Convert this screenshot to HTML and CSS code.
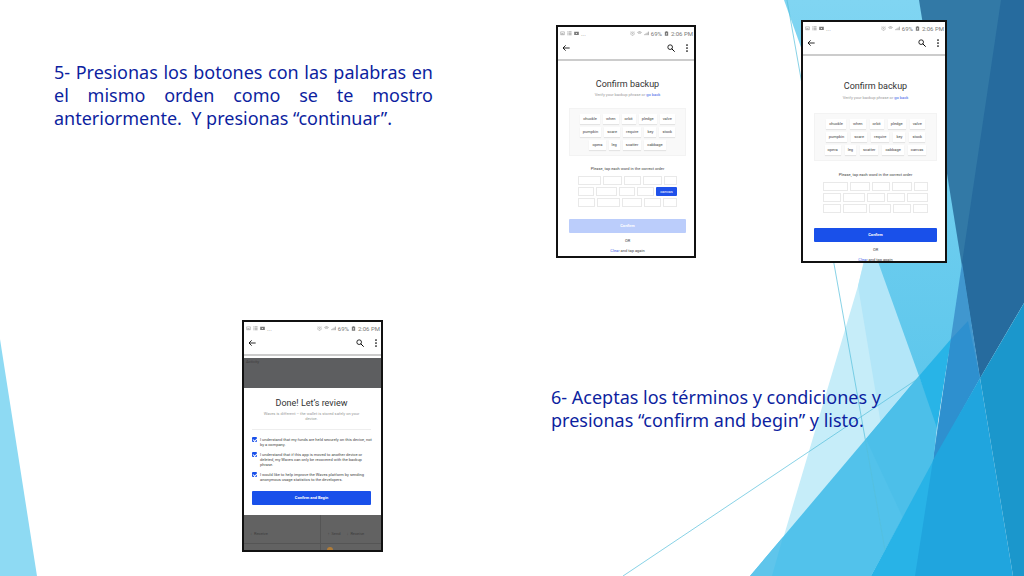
FILE: index.html
```html
<!DOCTYPE html>
<html lang="es">
<head>
    <meta charset="UTF-8">
    <meta name="viewport" content="width=device-width, initial-scale=1">
    <title>Confirmar respaldo</title>
    <link rel="stylesheet" href="styles.css">
</head>
<body>
<!-- icons -->
<svg class="defs" aria-hidden="true">
    <symbol id="i-pic" viewBox="0 0 24 24"><path d="M3 4h18v14H3z" fill="none" stroke="currentColor" stroke-width="2"/><path d="M5 16l5-6 4 4 2-2 3 4z" fill="currentColor"/></symbol>
    <symbol id="i-list" viewBox="0 0 24 24"><path d="M2 4h4M8 4h14M2 11h4M8 11h14M2 18h4M8 18h14" fill="none" stroke="currentColor" stroke-width="3"/></symbol>
    <symbol id="i-video" viewBox="0 0 24 24"><path fill-rule="evenodd" d="M1 4h22v15H1zM9 8v7l7-3.500z" fill="currentColor"/></symbol>
    <symbol id="i-alarm" viewBox="0 0 24 24"><path d="M12 5a8 8 0 1 0 .1 0zM12 9v5l3 2M2 5l4-3M22 5l-4-3" fill="none" stroke="currentColor" stroke-width="2"/></symbol>
    <symbol id="i-wifi" viewBox="0 0 24 24"><path d="M2 7q10-7 20 0M7 12q5-4 10 0" fill="none" stroke="currentColor" stroke-width="3"/></symbol>
    <symbol id="i-signal" viewBox="0 0 24 24"><path d="M3 20v-4M9 20v-8M15 20V8M21 20V3" fill="none" stroke="currentColor" stroke-width="3"/></symbol>
    <symbol id="i-battery" viewBox="0 0 24 24"><path fill-rule="evenodd" d="M8 1h8v3h4v19H4V4h4zM13 8l-5 7h3v4l5-7h-3z" fill="currentColor"/></symbol>
    <symbol id="i-back" viewBox="0 0 24 24"><path d="M23 12H3M11 4l-8 8 8 8" fill="none" stroke="currentColor" stroke-width="2.500"/></symbol>
    <symbol id="i-search" viewBox="0 0 24 24"><circle cx="9.500" cy="9.500" r="7" fill="none" stroke="currentColor" stroke-width="2.500"/><path d="M14 14l9 9" stroke="currentColor" stroke-width="3"/></symbol>
    <symbol id="i-more" viewBox="0 0 24 24"><circle cx="12" cy="3" r="2.600" fill="currentColor"/><circle cx="12" cy="12" r="2.600" fill="currentColor"/><circle cx="12" cy="21" r="2.600" fill="currentColor"/></symbol>
</svg>

<main class="slide">
    <!-- facets -->
    <svg class="facets" viewBox="0 0 1024 576" preserveAspectRatio="none" aria-hidden="true">
        <defs>
            <linearGradient id="sky" x1="0" y1="0" x2="0" y2="1">
                <stop offset="0" stop-color="#80d5f2"/>
                <stop offset="1" stop-color="#5ec7ec"/>
            </linearGradient>
        </defs>
        <path fill="#8edaf3" d="M0 339L37 576H0z"/>
        <path fill="#c6edf9" d="M865 256L858 286 772 576H900L919 376 878 256z"/>
        <path fill="#b3e6f8" d="M867 250L858 286 906 576 940 430 875 250z"/>
        <path fill="url(#sky)" d="M784 0H930L975 320 940 365 919 376z"/>
        <path fill="#3279a6" d="M919 0H1024V300L980 378z"/>
        <path fill="#266b9e" d="M1001 0H1024V303L980 378 962 263z"/>
        <path fill="#4097cf" d="M962 263L980 378 933 459z"/>
        <path fill="#52c2eb" d="M750 576L919 376 937 424 933 463 871 576z"/>
        <path fill="#4cbfe9" d="M866 439L919 376 937 424 933 463 903 518z"/>
        <path fill="#5fc5eb" d="M783 537L772 576H750z"/>
        <path fill="#28b4e7" d="M919 376L951 339 937 428z"/>
        <path fill="#2e90cf" d="M951 339L968 321 980 378 933 463z"/>
        <path fill="#28b3e7" d="M871 576L933 461V576z"/>
        <path fill="#20a5de" d="M915 576L933 460 980 378 1013 576z"/>
        <path fill="#1b97cc" d="M1024 303V576H1013L980 378z"/>
        <path class="thin" d="M787 0L885 550M623 576L919 378"/>
    </svg>

    <section class="step step-words">
        <p class="note justify">5- Presionas los botones con las palabras en el mismo orden como se te mostro anteriormente.&nbsp; Y presionas “continuar”.</p>

        <div class="phone phone-first">
            <div class="status">
                <svg><use href="#i-pic"/></svg><svg><use href="#i-list"/></svg><svg><use href="#i-video"/></svg><span>...</span>
                <span class="push"></span>
                <svg><use href="#i-alarm"/></svg><svg><use href="#i-wifi"/></svg><svg><use href="#i-signal"/></svg><span>69%</span><svg><use href="#i-battery"/></svg><span>2:06 PM</span>
            </div>
            <div class="toolbar">
                <button aria-label="Back"><svg><use href="#i-back"/></svg></button>
                <span class="push"></span>
                <button aria-label="Search"><svg><use href="#i-search"/></svg></button>
                <button aria-label="More"><svg><use href="#i-more"/></svg></button>
            </div>
            <div class="backup">
                <h2>Confirm backup</h2>
                <p class="sub">Verify your backup phrase or <a href="#">go back</a></p>
                <div class="words">
                    <div><button>chuckle</button><button>when</button><button>orbit</button><button>pledge</button><button>valve</button></div>
                    <div><button>pumpkin</button><button>scare</button><button>require</button><button>key</button><button>stock</button></div>
                    <div><button>opera</button><button>leg</button><button>scatter</button><button>cabbage</button></div>
                </div>
                <p class="hint">Please, tap each word in the correct order</p>
                <div class="slots">
                    <div class="row-a"><i></i><i></i><i></i><i></i><i></i></div>
                    <div class="row-picked"><i></i><i></i><i></i><i></i><button class="picked">canvas</button></div>
                    <div class="row-c"><i></i><i></i><i></i><i></i><i></i></div>
                </div>
                <button class="main-btn" disabled>Confirm</button>
                <p class="or">OR</p>
                <p class="again"><a href="#">Clear</a> and tap again</p>
            </div>
        </div>

        <div class="phone phone-second">
            <div class="status">
                <svg><use href="#i-pic"/></svg><svg><use href="#i-list"/></svg><svg><use href="#i-video"/></svg><span>...</span>
                <span class="push"></span>
                <svg><use href="#i-alarm"/></svg><svg><use href="#i-wifi"/></svg><svg><use href="#i-signal"/></svg><span>69%</span><svg><use href="#i-battery"/></svg><span>2:06 PM</span>
            </div>
            <div class="toolbar">
                <button aria-label="Back"><svg><use href="#i-back"/></svg></button>
                <span class="push"></span>
                <button aria-label="Search"><svg><use href="#i-search"/></svg></button>
                <button aria-label="More"><svg><use href="#i-more"/></svg></button>
            </div>
            <div class="backup">
                <h2>Confirm backup</h2>
                <p class="sub">Verify your backup phrase or <a href="#">go back</a></p>
                <div class="words">
                    <div><button>chuckle</button><button>when</button><button>orbit</button><button>pledge</button><button>valve</button></div>
                    <div><button>pumpkin</button><button>scare</button><button>require</button><button>key</button><button>stock</button></div>
                    <div><button>opera</button><button>leg</button><button>scatter</button><button>cabbage</button><button>canvas</button></div>
                </div>
                <p class="hint">Please, tap each word in the correct order</p>
                <div class="slots">
                    <div class="row-a"><i></i><i></i><i></i><i></i><i></i></div>
                    <div class="row-b"><i></i><i></i><i></i><i></i><i></i></div>
                    <div class="row-c"><i></i><i></i><i></i><i></i><i></i></div>
                </div>
                <button class="main-btn">Confirm</button>
                <p class="or">OR</p>
                <p class="again"><a href="#">Clear</a> and tap again</p>
            </div>
        </div>
    </section>

    <section class="step step-review">
        <div class="phone phone-third">
            <div class="status">
                <svg><use href="#i-pic"/></svg><svg><use href="#i-list"/></svg><svg><use href="#i-video"/></svg><span>...</span>
                <span class="push"></span>
                <svg><use href="#i-alarm"/></svg><svg><use href="#i-wifi"/></svg><svg><use href="#i-signal"/></svg><span>69%</span><svg><use href="#i-battery"/></svg><span>2:06 PM</span>
            </div>
            <div class="toolbar">
                <button aria-label="Back"><svg><use href="#i-back"/></svg></button>
                <span class="push"></span>
                <button aria-label="Search"><svg><use href="#i-search"/></svg></button>
                <button aria-label="More"><svg><use href="#i-more"/></svg></button>
            </div>
            <div class="shade-top">Activity</div>
            <div class="review">
                <h2>Done! Let’s review</h2>
                <p class="sub">Waves is different – the wallet is stored safely on your device.</p>
                <hr>
                <label><input type="checkbox" checked><span>I understand that my funds are held securely on this device, not by a company.</span></label>
                <label><input type="checkbox" checked><span>I understand that if this app is moved to another device or deleted, my Waves can only be recovered with the backup phrase.</span></label>
                <label><input type="checkbox" checked><span>I would like to help improve the Waves platform by sending anonymous usage statistics to the developers.</span></label>
                <button class="main-btn">Confirm and Begin</button>
            </div>
            <div class="shade-bottom">
                <div><span>↓ &nbsp;Receive</span></div>
                <div><span>↑ &nbsp;Send</span><span>↓ &nbsp;Receive</span></div>
                <div></div>
                <div><b></b></div>
            </div>
        </div>
        <p class="note">6- Aceptas los términos y condiciones y presionas “confirm and begin” y listo.</p>
    </section>
</main>
</body>
</html>
```
FILE: styles.css
```css
*{
    box-sizing: border-box;
    margin: 0;
    padding: 0;
}
body{
    background: #fff;
    font-family: Roboto, "Liberation Sans", sans-serif;
}
button{
    border: 0;
    background: none;
    font-family: inherit;
    cursor: pointer;
}
a{
    color: #3c62e8;
    text-decoration: none;
}
.defs{
    display: none;
}

/* slide */
.slide{
    position: relative;
    min-height: 100vh;
    overflow: hidden;
}
.facets{
    position: absolute;
    top: 0;
    left: 0;
    width: 100%;
    height: 100%;
}
.thin{
    fill: none;
    stroke: #56bfdc;
    stroke-opacity: .7;
}
.step{
    position: relative;
    display: flex;
    align-items: flex-start;
}
.step-words{
    padding: 20px 77px 0 54px;
}
.step-review{
    padding: 57px 116px 0 242px;
}
.note{
    flex: 1;
    color: #0d1fa0;
    font-family: "Trebuchet MS", "Noto Sans", "Open Sans", sans-serif;
    font-size: 18px;
    line-height: 23px;
}
.step-words .note{
    margin-top: 41px;
    margin-right: 123px;
}
.step-review .note{
    margin-top: 66px;
    margin-left: 168px;
}
.justify{
    text-align: justify;
}

/* phone */
.phone{
    flex: none;
    overflow: hidden;
    border: 2px solid #111;
    background: #fff;
    color: #444;
    font-size: 4px;
    line-height: 5px;
}
.phone-first{
    width: 140px;
    height: 233px;
    margin-top: 5px;
    margin-right: 105px;
}
.phone-second{
    width: 146px;
    height: 243px;
}
.phone-third{
    width: 141px;
    height: 232px;
}
.status{
    display: flex;
    align-items: center;
    gap: 2px;
    height: 13px;
    padding: 0 1px 0 2px;
    color: #777;
    font-size: 6px;
}
.status svg{
    width: 5px;
    height: 5px;
}
.push{
    flex: 1;
}
.toolbar{
    display: flex;
    align-items: center;
    gap: 8px;
    height: 21px;
    padding: 0 3px 3px 4px;
    border-bottom: 2px solid #ccc;
    color: #555;
}
.toolbar button{
    width: 8px;
    height: 8px;
}
.toolbar svg{
    display: block;
    width: 8px;
    height: 8px;
}

/* confirm backup */
.backup{
    padding: 17px 8px 0 11px;
    text-align: center;
}
.phone h2{
    color: #333;
    font-size: 9px;
    font-weight: 400;
    line-height: 12px;
}
.sub{
    margin-top: 2px;
    color: #999;
}
.words{
    display: grid;
    gap: 3px;
    margin-top: 11px;
    padding: 5px 0;
    border: 1px solid #f3f3f3;
    background: #f9f9f9;
}
.words div{
    display: flex;
    justify-content: center;
    gap: 3px;
}
.words button{
    height: 10px;
    padding: 0 3px;
    background: #fff;
    box-shadow: 0 1px 1px #e4e4e4;
    color: #444;
    font-size: 4px;
    line-height: 10px;
}
.hint{
    margin-top: 10px;
}
.slots{
    display: grid;
    gap: 2px;
    margin: 5px 9px 0;
}
.slots div{
    display: grid;
    gap: 2px;
    height: 9px;
}
.slots i{
    border: 1px solid #e9e9e9;
}
.row-a{
    grid-template-columns: 23fr 19fr 17fr 19fr 13fr;
}
.row-b{
    grid-template-columns: 18fr 21fr 18fr 17fr 21fr;
}
.row-picked{
    grid-template-columns: 16fr 21fr 16fr 17fr 21fr;
}
.row-c{
    grid-template-columns: 17fr 23fr 21fr 17fr 14fr;
}
.picked{
    border-radius: 1px;
    background: #1f51ea;
    color: #fff;
    font-size: 4px;
    line-height: 9px;
}
.main-btn{
    display: block;
    width: 100%;
    height: 14px;
    border-radius: 1px;
    background: #1950ea;
    color: #fff;
    font-size: 4px;
    font-weight: 700;
    line-height: 14px;
}
.main-btn:disabled{
    background: #bbcdfb;
}
.backup .main-btn{
    margin-top: 12px;
}
.or,
.again{
    margin-top: 5px;
}

/* the bigger capture has more air */
.phone-second .backup{
    padding-top: 24px;
}
.phone-second .sub{
    margin-top: 3px;
}
.phone-second .words{
    margin-top: 13px;
}
.phone-second .words div{
    gap: 4px;
}
.phone-second .hint{
    margin-top: 11px;
}
.phone-second .main-btn{
    margin-top: 15px;
}

/* review */
.phone-third .toolbar{
    padding-right: 1px;
}
.shade-top{
    height: 30px;
    margin-top: 2px;
    padding: 1px 2px;
    background: #5d5e60;
    color: #3d3d3d;
}
.review{
    padding: 9px 10px 10px 8px;
}
.review h2,
.review .sub{
    text-align: center;
}
.review .sub{
    padding: 0 8px;
}
.review hr{
    margin: 8px 0 7px;
    border: 0;
    border-top: 1px solid #eee;
}
.review label{
    display: flex;
    gap: 3px;
    margin-right: -8px;
    margin-bottom: 5px;
}
.review label span{
    max-width: 114px;
}
.review input{
    appearance: none;
    flex: none;
    width: 5px;
    height: 5px;
    border-radius: 1px;
    background: #1950ea;
}
.review input:checked::before{
    content: "";
    display: block;
    width: 3px;
    height: 2px;
    margin: 1px;
    border: solid #fff;
    border-width: 0 0 1px 1px;
    transform: rotate(-45deg);
}
.review .main-btn{
    margin-top: 9px;
}
.shade-bottom{
    display: grid;
    grid-template-columns: 77fr 60fr;
    grid-template-rows: 28px 12px;
    gap: 1px;
    background: #555;
}
.shade-bottom div{
    display: flex;
    gap: 6px;
    padding: 16px 6px 0;
    background: #626262;
    color: #3d3d3d;
}
.shade-bottom b{
    width: 6px;
    height: 6px;
    border-radius: 50%;
    background: #b07c38;
}
.shade-bottom div:nth-child(n+3){
    padding-top: 3px;
}
```
